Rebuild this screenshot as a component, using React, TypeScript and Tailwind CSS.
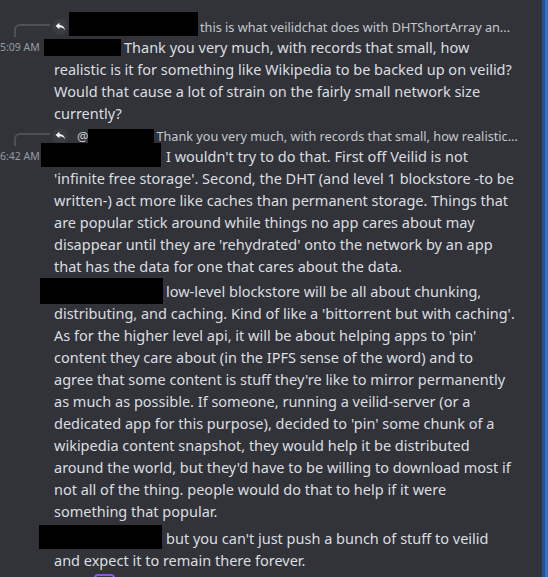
import React from 'react';

type MessageProps = {
    time?: string;
    boxClass: string;
    textClass: string;
    lines: string[];
    className?: string;
};

function ReplyIcon() {
    return (
        <span className="flex h-[16px] w-[16px] items-center justify-center rounded-full bg-[#3a3c42]">
            <svg width="11" height="9" viewBox="0 0 20 16" fill="#f2f3f5">
                <path d="M8 1 L1 7 L8 13 V9.5 C12.5 9.5 15.5 10.8 18.5 15 C17.5 9.5 14 6 8 5 Z" />
            </svg>
        </span>
    );
}

function Spine() {
    return (
        <div className="w-[52px] shrink-0 self-start pl-[14px] pt-[7px]">
            <div className="h-[13px] w-[36px] rounded-tl-[6px] border-l-2 border-t-2 border-[#4e5058]" />
        </div>
    );
}

function Message({ time, boxClass, textClass, lines, className }: MessageProps) {
    const [first, ...rest] = lines;
    return (
        <div className={'flex ' + (className ?? '')}>
            {/* TIMESTAMP GUTTER */}
            <div className="w-[54px] shrink-0 pr-[15px] text-right text-[10.5px] leading-[22px] text-[#949ba4] whitespace-nowrap">
                {time}
            </div>
            <div className="flex flex-col">
                <div className="flex h-[22px] items-center whitespace-nowrap">
                    <span className={'shrink-0 bg-black ' + boxClass} />
                    <span className={textClass}>{first}</span>
                </div>
                {rest.map((line, idx) => (
                    <div key={idx} className="h-[22px] whitespace-nowrap">
                        {line}
                    </div>
                ))}
            </div>
        </div>
    );
}

export default function App() {
    return (
        <div className="flex h-[577px] w-[548px] overflow-hidden bg-[#313338] font-['Noto_Sans',sans-serif] text-[14.5px] leading-[22px] text-[#dbdee1]">
            <div className="flex-1 pt-[17px]">
                {/* REPLY 1 */}
                <div className="flex h-[19px] items-center whitespace-nowrap text-[12.7px] text-[#c4c9ce]">
                    <Spine />
                    <ReplyIcon />
                    <span className="mb-[5px] ml-[1px] h-[24px] w-[129px] shrink-0 bg-black" />
                    <span className="ml-[2px]">this is what veilidchat does with DHTShortArray an...</span>
                </div>
                <Message
                    time="5:09 AM"
                    boxClass="-ml-[10px] h-[17px] w-[77px]"
                    textClass="ml-[3px]"
                    lines={[
                        'Thank you very much, with records that small, how',
                        'realistic is it for something like Wikipedia to be backed up on veilid?',
                        'Would that cause a lot of strain on the fairly small network size',
                        'currently?',
                    ]}
                />

                {/* REPLY 2 */}
                <div className="mt-[2px] flex h-[19px] items-center whitespace-nowrap text-[12.7px] text-[#c4c9ce]">
                    <Spine />
                    <ReplyIcon />
                    <span className="ml-[9px]">@</span>
                    <span className="h-[14px] w-[66px] shrink-0 bg-black" />
                    <span className="ml-[2px]">Thank you very much, with records that small, how realistic...</span>
                </div>
                <Message
                    time="6:42 AM"
                    boxClass="-ml-[13px] mb-[2px] h-[24px] w-[120px]"
                    textClass="ml-[5px]"
                    lines={[
                        "I wouldn't try to do that. First off Veilid is not",
                        "'infinite free storage'. Second, the DHT (and level 1 blockstore -to be",
                        'written-) act more like caches than permanent storage. Things that',
                        'are popular stick around while things no app cares about may',
                        "disappear until they are 'rehydrated' onto the network by an app",
                        'that has the data for one that cares about the data.',
                    ]}
                />
                <Message
                    className="mt-[3px]"
                    boxClass="-ml-[14px] h-[26px] w-[123px]"
                    textClass="ml-[3px]"
                    lines={[
                        'low-level blockstore will be all about chunking,',
                        "distributing, and caching. Kind of like a 'bittorrent but with caching'.",
                        "As for the higher level api, it will be about helping apps to 'pin'",
                        'content they care about (in the IPFS sense of the word) and to',
                        "agree that some content is stuff they're like to mirror permanently",
                        'as much as possible. If someone, running a veilid-server (or a',
                        "dedicated app for this purpose), decided to 'pin' some chunk of a",
                        'wikipedia content snapshot, they would help it be distributed',
                        "around the world, but they'd have to be willing to download most if",
                        'not all of the thing. people would do that to help if it were',
                        'something that popular.',
                    ]}
                />
                <Message
                    className="mt-[5px]"
                    boxClass="-ml-[15px] mb-[2px] h-[24px] w-[123px]"
                    textClass="ml-[4px]"
                    lines={[
                        "but you can't just push a bunch of stuff to veilid",
                        'and expect it to remain there forever.',
                    ]}
                />

                {/* REACTION PEEK */}
                <div className="ml-[94px] mt-[3px] h-[8px] w-[21px] rounded-[4px] border-2 border-[#8e58d6]" />
            </div>

            {/* SCROLLBAR */}
            <div className="flex w-[6px] shrink-0">
                <div className="w-[3px] bg-[#22509a]" />
                <div className="w-[3px] bg-[#3570c4]" />
            </div>
        </div>
    );
}
